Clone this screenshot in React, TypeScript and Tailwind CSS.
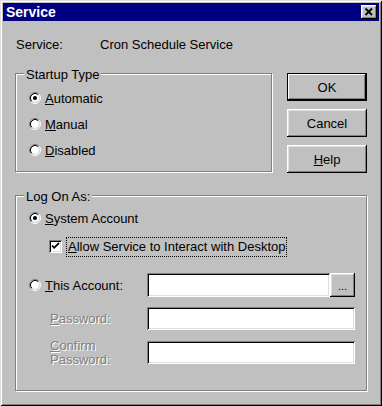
import React from "react";

const raised =
  "shadow-[inset_-1px_-1px_0_#000,inset_1px_1px_0_#fff,inset_-2px_-2px_0_#808080,inset_2px_2px_0_#dfdfdf]";
const sunken =
  "shadow-[inset_1px_1px_0_#808080,inset_-1px_-1px_0_#fff,inset_2px_2px_0_#000,inset_-2px_-2px_0_#dfdfdf]";
const etched = "border border-[#808080] shadow-[inset_1px_1px_0_#fff,1px_1px_0_#fff]";
const disabled = "text-[#808080] [text-shadow:1px_1px_0_#fff]";

function Radio({ checked }: { checked?: boolean }) {
  return (
    <svg width="12" height="12" viewBox="0 0 12 12" className="shrink-0">
      <circle cx="6" cy="6" r="4" fill="#fff" />
      <path d="M2.11 9.89A5.5 5.5 0 0 1 9.89 2.11" stroke="#808080" fill="none" />
      <path d="M9.89 2.11A5.5 5.5 0 0 1 2.11 9.89" stroke="#fff" fill="none" />
      <path d="M2.82 9.18A4.5 4.5 0 0 1 9.18 2.82" stroke="#000" fill="none" />
      <path d="M9.18 2.82A4.5 4.5 0 0 1 2.82 9.18" stroke="#dfdfdf" fill="none" />
      {checked && <circle cx="6" cy="6" r="2" fill="#000" />}
    </svg>
  );
}

function Checkbox() {
  return (
    <div className={`relative w-[13px] h-[13px] bg-white shrink-0 ${sunken}`}>
      <svg width="13" height="13" viewBox="0 0 13 13" className="absolute left-0 top-0">
        <path d="M3 5.5 L5.2 7.8 L10 3" stroke="#000" strokeWidth="1.8" fill="none" />
      </svg>
    </div>
  );
}

function RadioRow({ checked, k, rest }: { checked?: boolean; k: string; rest: string }) {
  return (
    <div className="flex items-center h-[26px]">
      <Radio checked={checked} />
      <span className="ml-[4px]">
        <u>{k}</u>
        {rest}
      </span>
    </div>
  );
}

export default function App() {
  return (
    <div
      className={`w-[382px] h-[406px] bg-[#c0c0c0] p-[3px] flex flex-col text-black text-[13px] leading-[15px] font-['Liberation_Sans',Arial,sans-serif] shadow-[inset_1px_1px_0_#dfdfdf,inset_-1px_-1px_0_#000,inset_2px_2px_0_#fff,inset_-2px_-2px_0_#808080]`}
    >
      {/* Title bar */}
      <div className="h-[18px] bg-[#000080] flex items-center justify-between pl-[3px] pr-[2px] shrink-0">
        <span className="text-white font-bold text-[14px] leading-[16px]">Service</span>
        <div className={`relative w-[16px] h-[14px] bg-[#c0c0c0] ${raised}`}>
          <svg width="16" height="14" viewBox="0 0 16 14" className="absolute left-0 top-0">
            <path d="M4.5 3.5 L11 10 M11 3.5 L4.5 10" stroke="#000" strokeWidth="1.8" fill="none" />
          </svg>
        </div>
      </div>

      <div className="px-[12px] flex flex-col">
        {/* Service name */}
        <div className="mt-[16px] flex pl-[1px]">
          <span className="w-[84px]">Service:</span>
          <span>Cron Schedule Service</span>
        </div>

        {/* Startup type + buttons */}
        <div className="mt-[21px] flex items-start">
          <div className={`relative w-[257px] h-[99px] ${etched} pt-[11px] pl-[13px]`}>
            <span className="absolute -top-[7px] left-[8px] px-[2px] bg-[#c0c0c0]">Startup Type</span>
            <RadioRow checked k="A" rest="utomatic" />
            <RadioRow k="M" rest="anual" />
            <RadioRow k="D" rest="isabled" />
          </div>
          <div className="ml-auto flex flex-col gap-[8px] w-[80px]">
            <button className="h-[28px] w-[80px] bg-[#c0c0c0] border border-black shadow-[inset_-1px_-1px_0_#000,inset_1px_1px_0_#fff,inset_-2px_-2px_0_#808080] flex items-center justify-center">
              OK
            </button>
            <button className={`h-[28px] w-[80px] bg-[#c0c0c0] ${raised} flex items-center justify-center`}>
              Cancel
            </button>
            <button className={`h-[28px] w-[80px] bg-[#c0c0c0] ${raised} flex items-center justify-center`}>
              <span>
                <u>H</u>elp
              </span>
            </button>
          </div>
        </div>

        {/* Log On As */}
        <div className={`relative mt-[22px] w-[352px] h-[196px] ${etched} pt-[9px] pl-[13px] flex flex-col`}>
          <span className="absolute -top-[7px] left-[8px] px-[2px] bg-[#c0c0c0]">Log On As:</span>
          <RadioRow checked k="S" rest="ystem Account" />
          <div className="mt-[5px] h-[21px] flex items-center pl-[20px]">
            <Checkbox />
            <div className="ml-[4px] border border-dotted border-black px-[1px] h-[20px] flex items-center">
              <span>
                <u>A</u>llow Service to Interact with Desktop
              </span>
            </div>
          </div>
          <div className="mt-[16px] h-[24px] flex items-center">
            <div className="w-[118px] flex items-center">
              <Radio />
              <span className="ml-[4px]">
                <u>T</u>his Account:
              </span>
            </div>
            <div className={`w-[183px] h-[24px] bg-white ${sunken}`} />
            <button className={`w-[25px] h-[24px] bg-[#c0c0c0] ${raised} flex items-end justify-center pb-[5px] text-[11px] leading-[11px]`}>
              ...
            </button>
          </div>
          <div className="mt-[10px] h-[23px] flex items-center">
            <span className={`w-[118px] pl-[21px] ${disabled}`}>
              <u>P</u>assword:
            </span>
            <div className={`w-[208px] h-[23px] bg-white ${sunken}`} />
          </div>
          <div className="mt-[11px] h-[23px] flex items-center">
            <span className={`w-[118px] pl-[21px] leading-[14px] ${disabled}`}>
              <u>C</u>onfirm
              <br />
              Password:
            </span>
            <div className={`w-[208px] h-[23px] bg-white ${sunken}`} />
          </div>
        </div>
      </div>
    </div>
  );
}
